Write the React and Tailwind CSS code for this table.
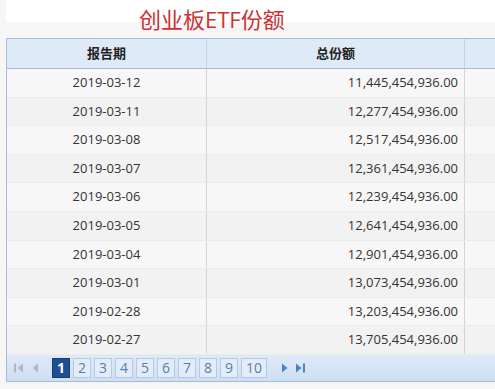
import React from 'react';

const rows = [
  ['2019-03-12', '11,445,454,936.00'],
  ['2019-03-11', '12,277,454,936.00'],
  ['2019-03-08', '12,517,454,936.00'],
  ['2019-03-07', '12,361,454,936.00'],
  ['2019-03-06', '12,239,454,936.00'],
  ['2019-03-05', '12,641,454,936.00'],
  ['2019-03-04', '12,901,454,936.00'],
  ['2019-03-01', '13,073,454,936.00'],
  ['2019-02-28', '13,203,454,936.00'],
  ['2019-02-27', '13,705,454,936.00'],
];

const pages = [1, 2, 3, 4, 5, 6, 7, 8, 9, 10];

function Tri({ dir = 'left', color, bar }) {
  return (
    <svg width="12" height="12" viewBox="0 0 12 12">
      {dir === 'left' ? (
        <>
          {bar && <rect x="1" y="1.5" width="2" height="9" fill={color} />}
          <path d={bar ? 'M10 1.5 L4.5 6 L10 10.5 Z' : 'M9 1.5 L3.5 6 L9 10.5 Z'} fill={color} />
        </>
      ) : (
        <>
          <path d={bar ? 'M2 1.5 L7.5 6 L2 10.5 Z' : 'M3 1.5 L8.5 6 L3 10.5 Z'} fill={color} />
          {bar && <rect x="9" y="1.5" width="2" height="9" fill={color} />}
        </>
      )}
    </svg>
  );
}

export default function App() {
  return (
    <div
      className="w-[495px] h-[389px] overflow-hidden bg-[#f6f6f6] text-[13px] text-[#333]"
      style={{ fontFamily: '"Open Sans", "Noto Sans CJK SC", sans-serif' }}
    >
      {/* 标题 */}
      <div className="h-[38px] pl-[6px] flex flex-col">
        <div className="relative h-[22px] bg-white">
          <div className="absolute left-[133px] top-[4px] text-[22px] leading-[30px] text-[#c93434] whitespace-nowrap">
            创业板ETF份额
          </div>
        </div>
      </div>

      {/* 表格 */}
      <div className="ml-[6px] border-l border-[#a9bbd2]">
        <div className="flex h-[31px] bg-[#dfeaf9] border-t border-b border-[#a9bbd2] font-bold text-[13px] text-[#222]">
          <div className="w-[200px] flex items-center justify-center border-r border-[#c5d3e6]">报告期</div>
          <div className="w-[258px] flex items-center justify-center border-r border-[#c5d3e6]">总份额</div>
          <div className="flex-1" />
        </div>
        {rows.map(([d, v], i) => (
          <div
            key={d}
            className={`flex h-[28.6px] border-b border-[#ebebeb] ${i % 2 ? 'bg-[#f2f2f2]' : 'bg-[#f7f7f7]'}`}
          >
            <div className="w-[200px] flex items-center justify-center border-r border-[#d4d4d4]">{d}</div>
            <div className="w-[258px] flex items-center justify-end pr-[6px] border-r border-[#d4d4d4]">{v}</div>
            <div className="flex-1" />
          </div>
        ))}

        {/* 分页 */}
        <div className="flex items-center h-[27px] bg-[linear-gradient(#dfeaf8,#cddff3)] border-b border-[#a9bbd2] pl-[6px] gap-[4px]">
          <Tri dir="left" bar color="#b0b8c4" />
          <Tri dir="left" color="#b0b8c4" />
          <div className="flex gap-[3px] ml-[7px]">
            {pages.map(p => (
              <div
                key={p}
                className={`h-[20px] flex items-center justify-center text-[14px] ${p === 10 ? 'w-[26px]' : 'w-[18px]'} ${
                  p === 1
                    ? 'bg-[#1d4f91] text-white font-bold border border-[#163d70]'
                    : 'bg-[#e3edf9] text-[#5a7fae] border border-[#b7c9e1]'
                }`}
              >
                {p}
              </div>
            ))}
          </div>
          <div className="flex gap-[3px] ml-[8px]">
            <Tri dir="right" color="#4d83c4" />
            <Tri dir="right" bar color="#4d83c4" />
          </div>
        </div>
      </div>
    </div>
  );
}
